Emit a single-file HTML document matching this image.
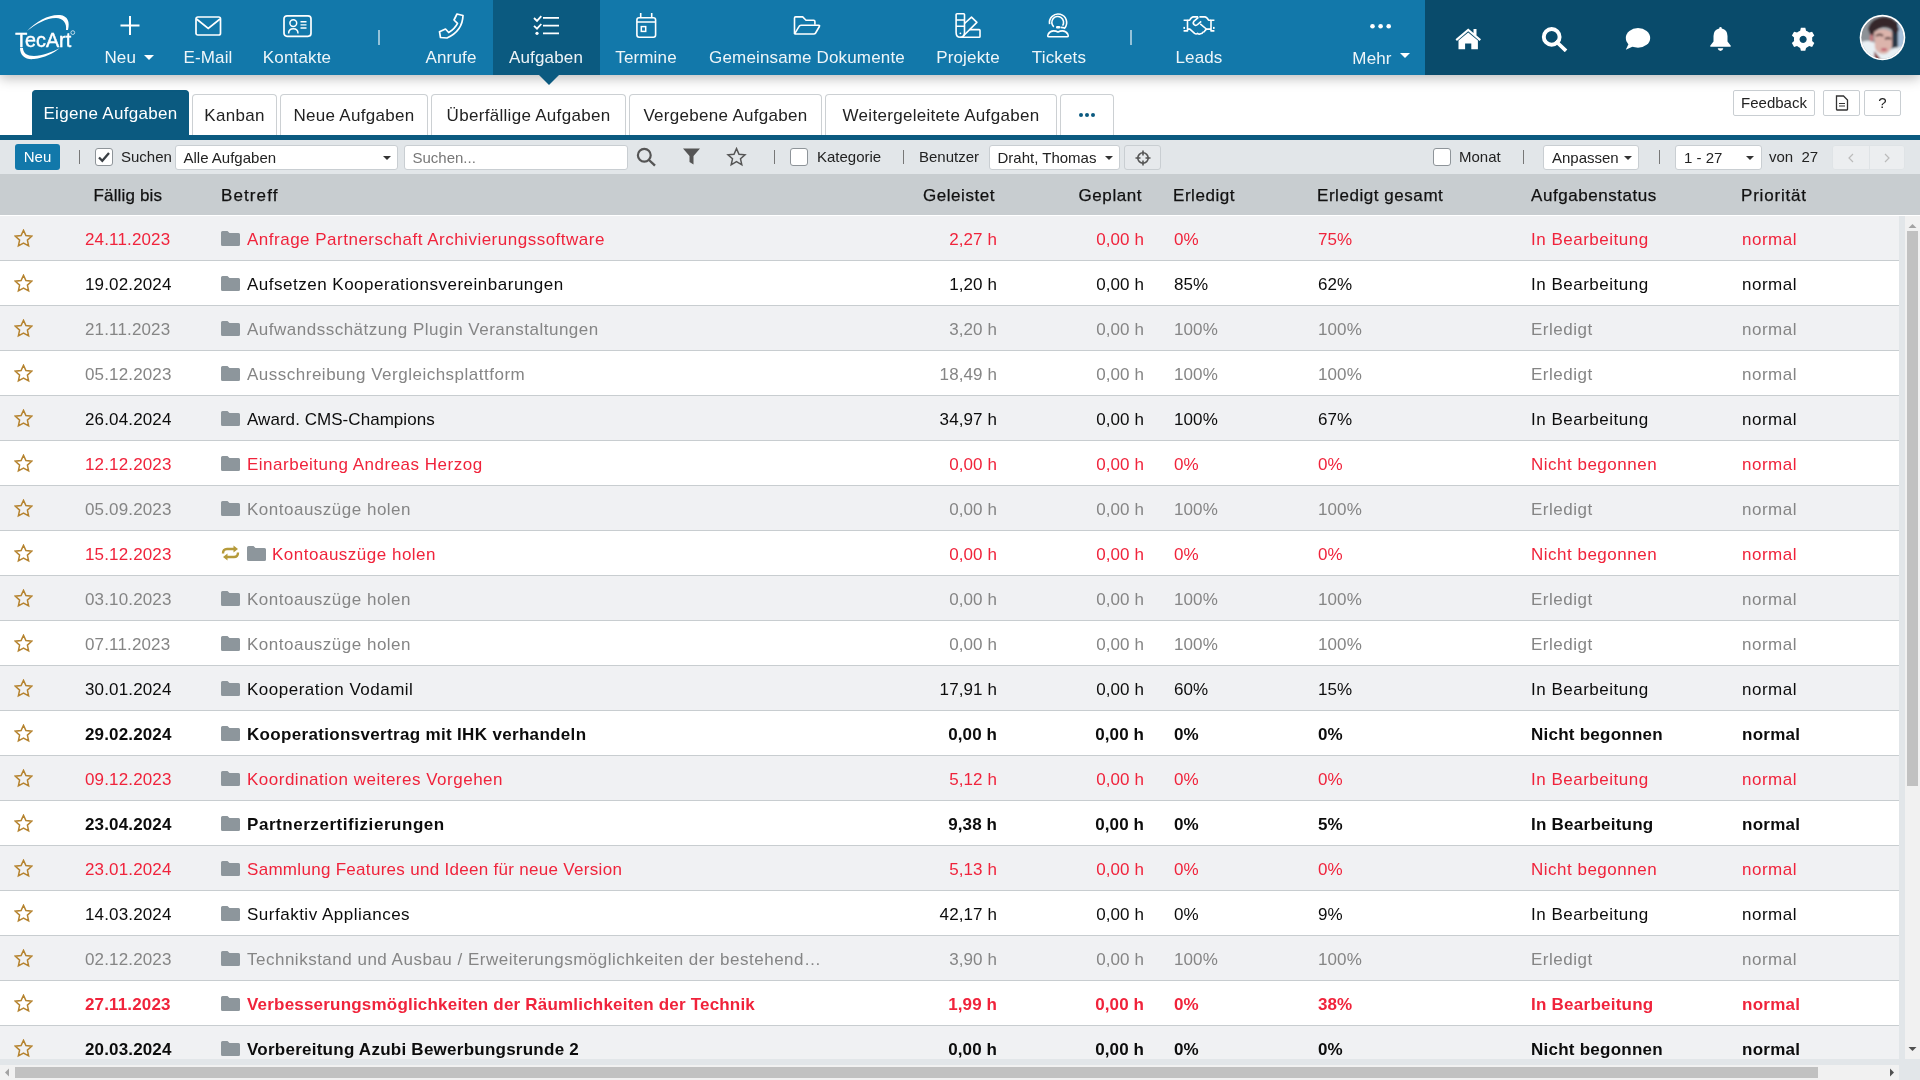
<!DOCTYPE html>
<html><head><meta charset="utf-8">
<style>
*{box-sizing:border-box}
html,body{margin:0;padding:0}
body{width:1920px;height:1080px;overflow:hidden;position:relative;will-change:transform;background:#fff;font-family:"Liberation Sans",sans-serif;color:#111}
.abs{position:absolute}
#hdr{position:absolute;left:0;top:0;width:1920px;height:75px;background:#1278aa;z-index:5;box-shadow:0 3px 12px rgba(0,0,0,.28)}
#hdr .dark{position:absolute;left:1425px;top:0;width:495px;height:75px;background:#094b6b}
#hdr .act{position:absolute;left:493px;top:0;width:107px;height:75px;background:#0b5a80}
#hdr .ptr{position:absolute;left:539px;top:75px;width:0;height:0;border-left:10px solid transparent;border-right:10px solid transparent;border-top:10px solid #0b5a80}
.nl{position:absolute;top:48px;width:240px;text-align:center;color:rgba(255,255,255,.93);font-size:17px;line-height:20px;white-space:nowrap;letter-spacing:.15px}
.nsep{position:absolute;top:30px;width:2px;height:15px;background:rgba(255,255,255,.55)}
.ico{position:absolute}
.caret{display:inline-block;width:0;height:0;border-left:5px solid transparent;border-right:5px solid transparent;border-top:5px solid #fff;vertical-align:middle;margin-left:8px;position:relative;top:-1px}
/* tabs */
.tab{position:absolute;top:94px;height:41px;border:1px solid #ccd0d3;border-bottom:none;border-radius:4px 4px 0 0;background:#fff;font-size:17px;line-height:20px;padding-top:11px;text-align:center;color:#222;white-space:nowrap;letter-spacing:.3px}
.tab.on{top:90px;height:45px;background:#0b5a80;border-color:#0b5a80;color:#fff;padding-top:13px}
#bar{position:absolute;left:0;top:135px;width:1920px;height:5px;background:#0b5a80}
/* toolbar */
#tb{position:absolute;left:0;top:140px;width:1920px;height:34px;background:#e2e6e9}
.tx{position:absolute;font-size:15px;line-height:18px;white-space:nowrap;color:#222}
.sel{position:absolute;top:4.5px;height:25px;background:#fff;border:1px solid #c9ced2;border-radius:3px}
.sel .tx{top:3px;left:8px}
.scaret{position:absolute;top:10.5px;width:0;height:0;border-left:4.5px solid transparent;border-right:4.5px solid transparent;border-top:4.5px solid #333}
.cb{position:absolute;top:8px;width:18px;height:17.5px;background:#fff;border:1px solid #8e9499;border-radius:3px}
.tsep{position:absolute;top:10px;width:1px;height:14px;background:#777}
/* table header */
#th{position:absolute;left:0;top:174px;width:1920px;height:41px;background:#c8cdd0}
#th span{position:absolute;top:12px;font-size:17px;line-height:20px;color:#111;white-space:nowrap;letter-spacing:.55px;-webkit-text-stroke:.25px #111}
#thw{position:absolute;left:0;top:215px;width:1899px;height:1px;background:#fff}
/* rows */
.row{position:absolute;left:0;width:1899px;height:45px;border-bottom:1px solid #c8cdd0}
.row .c{position:absolute;top:14px;font-size:17px;line-height:20px;white-space:nowrap;letter-spacing:.5px}
.row .ic{position:absolute;line-height:0}
.row .ic svg{display:block}
.red{color:#f0233b}
.blk{color:#0c0c0c}
.gry{color:#858585}
.bblk{color:#0c0c0c;font-weight:bold}
.bred{color:#f0233b;font-weight:bold}
.bblk .c,.bred .c{letter-spacing:.25px}
.row .c.n{letter-spacing:.1px}
/* scrollbars */
#vs1{position:absolute;left:1899px;top:216px;width:6px;height:864px;background:#e2e6e9}
#vs{position:absolute;left:1905px;top:216px;width:15px;height:843px;background:#f1f1f1}
#hs1{position:absolute;left:0;top:1059px;width:1920px;height:6px;background:#e2e6e9}
#hs{position:absolute;left:0;top:1065px;width:1899px;height:15px;background:#f1f1f1}
#corner{position:absolute;left:1899px;top:1059px;width:21px;height:21px;background:#e2e6e9}
</style></head><body>

<div id="hdr">
  <div class="dark"></div>
  <div class="act"></div>
  <div class="ptr"></div>
  <!-- logo -->
  <svg class="ico" style="left:12px;top:12px" width="66" height="52" viewBox="0 0 66 52">
    <path d="M15 19 C 24 9, 38 2, 48 3 C 56 4, 58 10, 56 18 L 54 18 C 55 11, 51 6, 44 6 C 34 6, 24 12, 15 19 Z" fill="#fff"/>
    <path d="M8 36 C 8 44, 14 48, 22 47 C 32 46, 42 41, 48 36 C 40 40, 30 44, 22 44 C 15 44, 11 41, 11 36 Z" fill="#fff"/>
    <text x="3.2" y="34.9" font-family="Liberation Sans" font-size="20.3" fill="#fff" stroke="#fff" stroke-width="0.45" textLength="56" lengthAdjust="spacingAndGlyphs">TecArt</text>
    <circle cx="60.8" cy="20.6" r="1.9" fill="none" stroke="#fff" stroke-width=".7"/>
  </svg>
  <!-- Neu -->
  <svg class="ico" style="left:120px;top:16px" width="20" height="20" viewBox="0 0 20 20"><path d="M10 0V19M0.5 9.5H19.5" stroke="#fff" stroke-width="2"/></svg>
  <div class="nl" style="left:9px">Neu<span class="caret" style="margin-left:7.5px"></span></div>
  <!-- E-Mail -->
  <svg class="ico" style="left:195px;top:16px" width="27" height="20" viewBox="0 0 27 20"><rect x="1" y="1" width="24.5" height="18" rx="1.8" fill="none" stroke="#fff" stroke-width="1.7"/><path d="M1.5 3 L13.25 12.5 L25 3" fill="none" stroke="#fff" stroke-width="1.7"/></svg>
  <div class="nl" style="left:88px">E-Mail</div>
  <!-- Kontakte -->
  <svg class="ico" style="left:282px;top:14px" width="31" height="24" viewBox="0 0 31 24"><rect x="2" y="1.8" width="27" height="20.5" rx="3" fill="none" stroke="#fff" stroke-width="1.7"/><circle cx="11.3" cy="9.1" r="3.4" fill="none" stroke="#fff" stroke-width="1.5"/><path d="M6.6 19.6 Q6.6 14.8 11.3 14.8 Q16 14.8 16 19.6" fill="none" stroke="#fff" stroke-width="1.5"/><path d="M18.5 7.8H24.5M18.5 10.9H24.5M18.5 14H24.5" stroke="#fff" stroke-width="1.4"/></svg>
  <div class="nl" style="left:177px">Kontakte</div>
  <div class="nsep" style="left:378px"></div>
  <!-- Anrufe -->
  <svg class="ico" style="left:436px;top:11px" width="30" height="30" viewBox="0 0 30 30"><path d="M21 3 L27 4.5 Q26.5 20 11 27 L4.5 26.5 L3.5 20.7 L9.5 18 L12.7 21.5 Q19 17.5 21.5 12.3 L18 9 Z" fill="none" stroke="#fff" stroke-width="1.7" stroke-linejoin="round"/></svg>
  <div class="nl" style="left:331px">Anrufe</div>
  <!-- Aufgaben -->
  <svg class="ico" style="left:532px;top:13px" width="30" height="24" viewBox="0 0 30 24"><path d="M2 5 L5 7.9 L9.3 3.2 M2 12.8 L5 15.7 L9.3 11" fill="none" stroke="#fff" stroke-width="1.8"/><circle cx="5" cy="20.3" r="1.6" fill="#fff"/><path d="M11 4.8H27M11 12.7H27M11 20.3H27" stroke="#fff" stroke-width="1.8"/></svg>
  <div class="nl" style="left:426px">Aufgaben</div>
  <!-- Termine -->
  <svg class="ico" style="left:633px;top:11px" width="26" height="29" viewBox="0 0 26 29"><rect x="3.9" y="6.8" width="18.7" height="19.5" rx="2.2" fill="none" stroke="#fff" stroke-width="1.6"/><path d="M3.9 11H22.6M7.7 2V6.5M18.7 2V6.5" stroke="#fff" stroke-width="1.6"/><rect x="8.3" y="15.6" width="4.4" height="4.8" fill="none" stroke="#fff" stroke-width="1.5"/></svg>
  <div class="nl" style="left:526px">Termine</div>
  <!-- Gemeinsame Dokumente -->
  <svg class="ico" style="left:790px;top:13px" width="32" height="24" viewBox="0 0 32 24"><path d="M4.5 21 V5 Q4.5 3.9 5.6 3.9 H12.7 L16 7.2 H23.7 Q24.9 7.2 24.9 8.4 V11.8" fill="none" stroke="#fff" stroke-width="1.6" stroke-linejoin="round"/><path d="M4.9 20.3 L9.1 13.4 Q9.6 12.2 11 12.2 H28.6 Q30 12.2 29.4 13.5 L25.6 20 Q25 21 23.7 21 H5.6 Q4.5 21 4.9 20.3 Z" fill="none" stroke="#fff" stroke-width="1.6" stroke-linejoin="round"/></svg>
  <div class="nl" style="left:687px">Gemeinsame Dokumente</div>
  <!-- Projekte -->
  <svg class="ico" style="left:954px;top:12px" width="28" height="27" viewBox="0 0 28 27"><path d="M2.1 2.6 Q2.1 1.7 3 1.7 H9.7 Q10.5 1.7 10.5 2.6 V20.5 Q10.5 25.2 6.3 25.2 Q2.1 25.2 2.1 20.5 Z" fill="none" stroke="#fff" stroke-width="1.6"/><path d="M2.1 8H10.5M2.1 14.3H10.5" stroke="#fff" stroke-width="1.6"/><circle cx="6.4" cy="21.3" r=".9" fill="#fff"/><path d="M10.5 11.5 L17.5 5.2 L22.9 10.4 L9 24.3" fill="none" stroke="#fff" stroke-width="1.6" stroke-linejoin="round"/><path d="M15.5 17.6 H25.2 Q26 17.6 26 18.4 V24.4 Q26 25.2 25.2 25.2 H6.3" fill="none" stroke="#fff" stroke-width="1.6" stroke-linejoin="round"/></svg>
  <div class="nl" style="left:848px">Projekte</div>
  <!-- Tickets -->
  <svg class="ico" style="left:1045px;top:11px" width="26" height="28" viewBox="0 0 26 28"><path d="M4.6 13.2 A8.6 8.6 0 1 1 19.6 17.2 Q18.5 16.4 15.5 16.4" fill="none" stroke="#fff" stroke-width="1.6"/><path d="M8.8 15.8 A5.9 5.9 0 1 1 17.6 14.6" fill="none" stroke="#fff" stroke-width="1.6"/><rect x="11" y="15.1" width="4.2" height="2.4" rx="1.1" fill="#fff"/><path d="M3.8 25.8 Q2 25.8 3.3 23 Q5 19.9 8.5 19.9 Q11 19.9 13 21 Q15 19.9 17.5 19.9 Q21 19.9 22.7 23 Q24 25.8 22.2 25.8 Z" fill="none" stroke="#fff" stroke-width="1.6" stroke-linejoin="round"/></svg>
  <div class="nl" style="left:939px">Tickets</div>
  <div class="nsep" style="left:1130px"></div>
  <!-- Leads -->
  <svg class="ico" style="left:1181px;top:14px" width="36" height="23" viewBox="0 0 36 23"><g fill="none" stroke="#fff" stroke-width="1.6" stroke-linejoin="round" stroke-linecap="butt">
  <path d="M2.6 6.2 H6.5 V16.9 H2.6"/><path d="M33.4 6.2 H30 V16.9 H33.4"/>
  <path d="M6.5 6.2 H8.7 Q10.5 2.9 12.3 2.9 H17.2"/><path d="M18.4 2.9 H23.9 Q25.7 2.9 27.5 6.2 H30"/>
  <path d="M17.4 3.4 L12.8 7.4 Q11.4 9.4 13.4 10.9 Q15 11.9 16.6 10.5 L20.2 7.3"/><path d="M19.2 9.8 L25.4 15"/>
  <path d="M6.5 15.1 H8.9 L13.6 19.4 Q15.2 20.6 16.6 19.4 Q18 20.6 19.6 19.8 Q21.4 19.8 21.8 18.3 Q23.4 18.3 23.8 16.9 L25.4 15.1 H30"/>
  </g><rect x="2.4" y="12.9" width="1.6" height="2" fill="#fff"/><rect x="32" y="12.9" width="1.6" height="2" fill="#fff"/></svg>
  <div class="nl" style="left:1079px">Leads</div>
  <!-- Mehr -->
  <svg class="ico" style="left:1369px;top:22px" width="24" height="9" viewBox="0 0 24 9"><circle cx="3.5" cy="4.3" r="2.3" fill="#fff"/><circle cx="11.6" cy="4.3" r="2.3" fill="#fff"/><circle cx="19.7" cy="4.3" r="2.3" fill="#fff"/></svg>
  <div class="nl" style="left:1261px;top:48.5px">Mehr<span class="caret" style="top:-3.5px"></span></div>
  <!-- right icons -->
  <svg class="ico" style="left:1454px;top:27px" width="29" height="24" viewBox="0 0 29 24"><path d="M1.5 12.3 L14.2 1.5 L19.5 6 V2 H22.5 V8.6 L27 12.3 L25.6 13.9 L14.2 4.3 L2.9 13.9 Z" fill="#fff"/><path d="M4.5 13.5 L14.2 5.4 L23.9 13.5 V22.3 H17.3 V16.4 H11.1 V22.3 H4.5 Z" fill="#fff"/></svg>
  <svg class="ico" style="left:1541px;top:27px" width="27" height="25" viewBox="0 0 27 25"><circle cx="10.7" cy="9.9" r="7.9" fill="none" stroke="#fff" stroke-width="3.9"/><path d="M16 15.3 L23.7 22.6" stroke="#fff" stroke-width="3.7" stroke-linecap="square"/></svg>
  <svg class="ico" style="left:1624px;top:27px" width="28" height="24" viewBox="0 0 28 24"><ellipse cx="14" cy="10.9" rx="12.2" ry="9.8" fill="#fff"/><path d="M5 16 L1.8 22.7 L10 19" fill="#fff"/></svg>
  <svg class="ico" style="left:1709px;top:26px" width="23" height="26" viewBox="0 0 23 26"><path d="M11.5 1 Q12.8 1 12.8 2.4 Q18.5 3.8 18.5 10 V15.5 L21.8 19.7 Q22.3 20.8 21 20.8 H2 Q0.7 20.8 1.2 19.7 L4.5 15.5 V10 Q4.5 3.8 10.2 2.4 Q10.2 1 11.5 1 Z" fill="#fff"/><path d="M8.7 22.3 H14.3 Q13.9 25 11.5 25 Q9.1 25 8.7 22.3 Z" fill="#fff"/></svg>
  <svg class="ico" style="left:1790px;top:26px" width="26" height="26" viewBox="0 0 26 26"><g transform="translate(13.1 13.3) scale(0.92)"><path d="M-2.4 -11.8 H2.4 L3.2 -8.6 Q5.2 -7.9 6.6 -6.6 L9.8 -7.5 L12.2 -3.4 L9.8 -1.1 Q10.1 1 9.8 2.6 L12.2 4.9 L9.8 9 L6.6 8.1 Q5 9.4 3.2 10.1 L2.4 13.3 H-2.4 L-3.2 10.1 Q-5.2 9.4 -6.6 8.1 L-9.8 9 L-12.2 4.9 L-9.8 2.6 Q-10.1 0.8 -9.8 -1.1 L-12.2 -3.4 L-9.8 -7.5 L-6.6 -6.6 Q-5 -7.9 -3.2 -8.6 Z M0 -3.1 A3.9 3.9 0 1 0 0.01 -3.1 Z" fill="#fff" fill-rule="evenodd" transform="translate(0 -0.75)"/></g></svg>
  <!-- avatar -->
  <svg class="ico" style="left:1859px;top:14px" width="47" height="47" viewBox="0 0 47 47">
    <defs><clipPath id="avc"><circle cx="23.5" cy="23.5" r="21"/></clipPath><filter id="avb" x="-20%" y="-20%" width="140%" height="140%"><feGaussianBlur stdDeviation="0.8"/></filter></defs>
    <circle cx="23.5" cy="23.5" r="22.8" fill="#fff"/>
    <g clip-path="url(#avc)">
      <rect x="0" y="0" width="47" height="47" fill="#9aa3ab"/>
      <g filter="url(#avb)">
        <rect x="-2" y="-2" width="20" height="30" fill="#8d9297"/>
        <rect x="33" y="8" width="6" height="30" fill="#2a3746"/>
        <rect x="39" y="8" width="10" height="30" fill="#a9c2dc"/>
        <path d="M-2 30 Q8 24 16 29 L30 36 Q38 31 49 34 L49 49 L-2 49 Z" fill="#e9f0f4"/>
        <path d="M9 15 Q12 3 26 3 Q38 4 40 16 L37 21 Q33 12 24 13 Q16 14 13 25 Z" fill="#35262a"/>
        <path d="M15 18 Q24 12 33 18 L33 32 Q30 40 25 40 Q18 40 16 34 Z" fill="#dcb4ac"/>
        <path d="M17 22 Q21 19 24 22" stroke="#4a3030" stroke-width="1.8" fill="none"/>
        <path d="M26 25 Q29 23 32 25" stroke="#4a3030" stroke-width="1.8" fill="none"/>
        <ellipse cx="25" cy="35.5" rx="3" ry="1.5" fill="#c26070"/>
        <path d="M15 37 Q20 43 23 47 L16 47 Z" fill="#7a1d1d"/>
        <ellipse cx="12.5" cy="24" rx="1.8" ry="3.8" fill="#c7777a"/>
      </g>
    </g>
  </svg>
</div>

<!-- tabs -->
<div class="tab on" style="left:32px;width:157px">Eigene Aufgaben</div>
<div class="tab" style="left:192px;width:85px">Kanban</div>
<div class="tab" style="left:280px;width:148px">Neue Aufgaben</div>
<div class="tab" style="left:431px;width:195px">Überfällige Aufgaben</div>
<div class="tab" style="left:629px;width:193px">Vergebene Aufgaben</div>
<div class="tab" style="left:825px;width:232px">Weitergeleitete Aufgaben</div>
<div class="tab" style="left:1060px;width:54px"><svg width="18" height="6" viewBox="0 0 18 6" style="position:relative;top:-3px"><circle cx="3" cy="3" r="2" fill="#0b5a80"/><circle cx="9" cy="3" r="2" fill="#0b5a80"/><circle cx="15" cy="3" r="2" fill="#0b5a80"/></svg></div>
<div class="abs" style="left:1733px;top:90px;width:82px;height:26px;border:1px solid #c9ced2;border-radius:2px;font-size:15px;line-height:18px;padding-top:3px;text-align:center;color:#222">Feedback</div>
<div class="abs" style="left:1823px;top:90px;width:37px;height:26px;border:1px solid #c9ced2;border-radius:2px"><svg width="14" height="16" viewBox="0 0 14 16" style="position:absolute;left:11px;top:4px"><path d="M1.5 1 H8.5 L12.5 5 V14.5 Q12.5 15 12 15 H2 Q1.5 15 1.5 14.5 Z" fill="none" stroke="#333" stroke-width="1.3"/><path d="M4 8.5H10M4 11H10" stroke="#333" stroke-width="1.2"/></svg></div>
<div class="abs" style="left:1864px;top:90px;width:37px;height:26px;border:1px solid #c9ced2;border-radius:2px;font-size:15px;line-height:18px;padding-top:3px;text-align:center;color:#222">?</div>
<div id="bar"></div>

<!-- toolbar -->
<div id="tb">
  <div class="abs" style="left:15px;top:4px;width:45px;height:25.5px;background:#1278aa;border-radius:3px;color:#fff;font-size:15px;line-height:18px;padding-top:4px;text-align:center">Neu</div>
  <div class="tsep" style="left:79px"></div>
  <div class="cb" style="left:95px"><svg width="16" height="16" viewBox="0 0 16 16" style="position:absolute;left:0;top:0"><path d="M3 8.5 L6.3 11.8 L13 4" fill="none" stroke="#3a3f44" stroke-width="2.3"/></svg></div>
  <div class="tx" style="left:121px;top:8px">Suchen</div>
  <div class="sel" style="left:174.5px;width:223.5px"><div class="tx">Alle Aufgaben</div><div class="scaret" style="left:207px"></div></div>
  <div class="sel" style="left:403.5px;width:224px"><div class="tx" style="color:#777">Suchen...</div></div>
  <svg class="abs" style="left:636px;top:147px" width="21" height="20" viewBox="0 0 21 20"></svg>
  <svg class="abs" style="left:636px;top:7px" width="21" height="20" viewBox="0 0 21 20"><circle cx="8.3" cy="8.3" r="6.4" fill="none" stroke="#555" stroke-width="2.2"/><path d="M13 13 L19 18.7" stroke="#555" stroke-width="2.4"/></svg>
  <svg class="abs" style="left:682px;top:8px" width="19" height="18" viewBox="0 0 19 18"><path d="M1 0.5 H18 L11.5 8 V16.5 L7.5 14 V8 Z" fill="#555"/></svg>
  <svg class="abs" style="left:726px;top:7px" width="21" height="20" viewBox="0 0 21 20"><path d="M10.5 1.6 L13 7.2 L19 7.8 L14.5 11.8 L15.8 17.8 L10.5 14.7 L5.2 17.8 L6.5 11.8 L2 7.8 L8 7.2 Z" fill="none" stroke="#555" stroke-width="1.5"/></svg>
  <div class="tsep" style="left:773.5px"></div>
  <div class="cb" style="left:790px"></div>
  <div class="tx" style="left:817px;top:8px">Kategorie</div>
  <div class="tsep" style="left:902.5px"></div>
  <div class="tx" style="left:919px;top:8px">Benutzer</div>
  <div class="sel" style="left:988.5px;width:131px"><div class="tx">Draht, Thomas</div><div class="scaret" style="left:115px"></div></div>
  <div class="sel" style="left:1124px;width:36.5px;background:#e6e9ec"><svg width="20" height="20" viewBox="0 0 20 20" style="position:absolute;left:8px;top:2px"><circle cx="10" cy="10" r="5.2" fill="none" stroke="#555" stroke-width="1.6"/><path d="M10 2.5V7.5M10 12.5V17.5M2.5 10H7.5M12.5 10H17.5" stroke="#555" stroke-width="1.6"/></svg></div>
  <div class="cb" style="left:1433px"></div>
  <div class="tx" style="left:1459px;top:8px">Monat</div>
  <div class="tsep" style="left:1522.5px"></div>
  <div class="sel" style="left:1543px;width:96px"><div class="tx">Anpassen</div><div class="scaret" style="left:80px"></div></div>
  <div class="tsep" style="left:1658.5px"></div>
  <div class="sel" style="left:1675px;width:87px"><div class="tx">1 - 27</div><div class="scaret" style="left:70px"></div></div>
  <div class="tx" style="left:1769px;top:8px">von&nbsp; 27</div>
  <div class="sel" style="left:1832px;width:72.5px;background:#eceef0;border-color:#dfe3e6"><div class="abs" style="left:35.5px;top:0;width:1px;height:23px;background:#dfe3e6"></div>
    <svg width="8" height="10" viewBox="0 0 8 10" style="position:absolute;left:14px;top:7px"><path d="M6 1 L2 5 L6 9" fill="none" stroke="#bbb" stroke-width="1.2"/></svg>
    <svg width="8" height="10" viewBox="0 0 8 10" style="position:absolute;left:50px;top:7px"><path d="M2 1 L6 5 L2 9" fill="none" stroke="#bbb" stroke-width="1.2"/></svg>
  </div>
</div>

<!-- table header -->
<div id="th">
  <span style="left:93.5px;letter-spacing:.15px">Fällig bis</span>
  <span style="left:221px;letter-spacing:1.1px">Betreff</span>
  <span style="right:925px">Geleistet</span>
  <span style="right:778px">Geplant</span>
  <span style="left:1173px">Erledigt</span>
  <span style="left:1317px">Erledigt gesamt</span>
  <span style="left:1531px">Aufgabenstatus</span>
  <span style="left:1741px;letter-spacing:.8px">Priorität</span>
</div>
<div id="thw"></div>

<div class="row red" style="top:216px;background:#f0f1f3"><div class="ic" style="left:14px;top:13px"><svg class="star" width="19" height="19" viewBox="0 0 19 19"><path d="M9.5 1.3 L11.9 6.6 L17.7 7.2 L13.4 11.1 L14.6 16.9 L9.5 14 L4.4 16.9 L5.6 11.1 L1.3 7.2 L7.1 6.6 Z" fill="none" stroke="#b5832f" stroke-width="1.5" stroke-linejoin="miter"/></svg></div><span class="c n" style="left:85px;letter-spacing:.15px">24.11.2023</span><div class="ic" style="left:221px;top:15px"><svg class="fold" width="19" height="15" viewBox="0 0 19 15"><path d="M0 1.5 Q0 0 1.5 0 L6.5 0 L8.5 2 L17.5 2 Q19 2 19 3.5 L19 13.5 Q19 15 17.5 15 L1.5 15 Q0 15 0 13.5 Z" fill="#8d969c"/></svg></div><span class="c" style="left:247px">Anfrage Partnerschaft Archivierungssoftware</span><span class="c n" style="right:902px">2,27 h</span><span class="c n" style="right:755px">0,00 h</span><span class="c n" style="left:1174px">0%</span><span class="c n" style="left:1318px">75%</span><span class="c" style="left:1531px">In Bearbeitung</span><span class="c" style="left:1742px">normal</span></div>
<div class="row blk" style="top:261px;background:#ffffff"><div class="ic" style="left:14px;top:13px"><svg class="star" width="19" height="19" viewBox="0 0 19 19"><path d="M9.5 1.3 L11.9 6.6 L17.7 7.2 L13.4 11.1 L14.6 16.9 L9.5 14 L4.4 16.9 L5.6 11.1 L1.3 7.2 L7.1 6.6 Z" fill="none" stroke="#b5832f" stroke-width="1.5" stroke-linejoin="miter"/></svg></div><span class="c n" style="left:85px;letter-spacing:.15px">19.02.2024</span><div class="ic" style="left:221px;top:15px"><svg class="fold" width="19" height="15" viewBox="0 0 19 15"><path d="M0 1.5 Q0 0 1.5 0 L6.5 0 L8.5 2 L17.5 2 Q19 2 19 3.5 L19 13.5 Q19 15 17.5 15 L1.5 15 Q0 15 0 13.5 Z" fill="#8d969c"/></svg></div><span class="c" style="left:247px">Aufsetzen Kooperationsvereinbarungen</span><span class="c n" style="right:902px">1,20 h</span><span class="c n" style="right:755px">0,00 h</span><span class="c n" style="left:1174px">85%</span><span class="c n" style="left:1318px">62%</span><span class="c" style="left:1531px">In Bearbeitung</span><span class="c" style="left:1742px">normal</span></div>
<div class="row gry" style="top:306px;background:#f0f1f3"><div class="ic" style="left:14px;top:13px"><svg class="star" width="19" height="19" viewBox="0 0 19 19"><path d="M9.5 1.3 L11.9 6.6 L17.7 7.2 L13.4 11.1 L14.6 16.9 L9.5 14 L4.4 16.9 L5.6 11.1 L1.3 7.2 L7.1 6.6 Z" fill="none" stroke="#b5832f" stroke-width="1.5" stroke-linejoin="miter"/></svg></div><span class="c n" style="left:85px;letter-spacing:.15px">21.11.2023</span><div class="ic" style="left:221px;top:15px"><svg class="fold" width="19" height="15" viewBox="0 0 19 15"><path d="M0 1.5 Q0 0 1.5 0 L6.5 0 L8.5 2 L17.5 2 Q19 2 19 3.5 L19 13.5 Q19 15 17.5 15 L1.5 15 Q0 15 0 13.5 Z" fill="#8d969c"/></svg></div><span class="c" style="left:247px">Aufwandsschätzung Plugin Veranstaltungen</span><span class="c n" style="right:902px">3,20 h</span><span class="c n" style="right:755px">0,00 h</span><span class="c n" style="left:1174px">100%</span><span class="c n" style="left:1318px">100%</span><span class="c" style="left:1531px">Erledigt</span><span class="c" style="left:1742px">normal</span></div>
<div class="row gry" style="top:351px;background:#ffffff"><div class="ic" style="left:14px;top:13px"><svg class="star" width="19" height="19" viewBox="0 0 19 19"><path d="M9.5 1.3 L11.9 6.6 L17.7 7.2 L13.4 11.1 L14.6 16.9 L9.5 14 L4.4 16.9 L5.6 11.1 L1.3 7.2 L7.1 6.6 Z" fill="none" stroke="#b5832f" stroke-width="1.5" stroke-linejoin="miter"/></svg></div><span class="c n" style="left:85px;letter-spacing:.15px">05.12.2023</span><div class="ic" style="left:221px;top:15px"><svg class="fold" width="19" height="15" viewBox="0 0 19 15"><path d="M0 1.5 Q0 0 1.5 0 L6.5 0 L8.5 2 L17.5 2 Q19 2 19 3.5 L19 13.5 Q19 15 17.5 15 L1.5 15 Q0 15 0 13.5 Z" fill="#8d969c"/></svg></div><span class="c" style="left:247px">Ausschreibung Vergleichsplattform</span><span class="c n" style="right:902px">18,49 h</span><span class="c n" style="right:755px">0,00 h</span><span class="c n" style="left:1174px">100%</span><span class="c n" style="left:1318px">100%</span><span class="c" style="left:1531px">Erledigt</span><span class="c" style="left:1742px">normal</span></div>
<div class="row blk" style="top:396px;background:#f0f1f3"><div class="ic" style="left:14px;top:13px"><svg class="star" width="19" height="19" viewBox="0 0 19 19"><path d="M9.5 1.3 L11.9 6.6 L17.7 7.2 L13.4 11.1 L14.6 16.9 L9.5 14 L4.4 16.9 L5.6 11.1 L1.3 7.2 L7.1 6.6 Z" fill="none" stroke="#b5832f" stroke-width="1.5" stroke-linejoin="miter"/></svg></div><span class="c n" style="left:85px;letter-spacing:.15px">26.04.2024</span><div class="ic" style="left:221px;top:15px"><svg class="fold" width="19" height="15" viewBox="0 0 19 15"><path d="M0 1.5 Q0 0 1.5 0 L6.5 0 L8.5 2 L17.5 2 Q19 2 19 3.5 L19 13.5 Q19 15 17.5 15 L1.5 15 Q0 15 0 13.5 Z" fill="#8d969c"/></svg></div><span class="c" style="left:247px;letter-spacing:.05px">Award. CMS-Champions</span><span class="c n" style="right:902px">34,97 h</span><span class="c n" style="right:755px">0,00 h</span><span class="c n" style="left:1174px">100%</span><span class="c n" style="left:1318px">67%</span><span class="c" style="left:1531px">In Bearbeitung</span><span class="c" style="left:1742px">normal</span></div>
<div class="row red" style="top:441px;background:#ffffff"><div class="ic" style="left:14px;top:13px"><svg class="star" width="19" height="19" viewBox="0 0 19 19"><path d="M9.5 1.3 L11.9 6.6 L17.7 7.2 L13.4 11.1 L14.6 16.9 L9.5 14 L4.4 16.9 L5.6 11.1 L1.3 7.2 L7.1 6.6 Z" fill="none" stroke="#b5832f" stroke-width="1.5" stroke-linejoin="miter"/></svg></div><span class="c n" style="left:85px;letter-spacing:.15px">12.12.2023</span><div class="ic" style="left:221px;top:15px"><svg class="fold" width="19" height="15" viewBox="0 0 19 15"><path d="M0 1.5 Q0 0 1.5 0 L6.5 0 L8.5 2 L17.5 2 Q19 2 19 3.5 L19 13.5 Q19 15 17.5 15 L1.5 15 Q0 15 0 13.5 Z" fill="#8d969c"/></svg></div><span class="c" style="left:247px">Einarbeitung Andreas Herzog</span><span class="c n" style="right:902px">0,00 h</span><span class="c n" style="right:755px">0,00 h</span><span class="c n" style="left:1174px">0%</span><span class="c n" style="left:1318px">0%</span><span class="c" style="left:1531px">Nicht begonnen</span><span class="c" style="left:1742px">normal</span></div>
<div class="row gry" style="top:486px;background:#f0f1f3"><div class="ic" style="left:14px;top:13px"><svg class="star" width="19" height="19" viewBox="0 0 19 19"><path d="M9.5 1.3 L11.9 6.6 L17.7 7.2 L13.4 11.1 L14.6 16.9 L9.5 14 L4.4 16.9 L5.6 11.1 L1.3 7.2 L7.1 6.6 Z" fill="none" stroke="#b5832f" stroke-width="1.5" stroke-linejoin="miter"/></svg></div><span class="c n" style="left:85px;letter-spacing:.15px">05.09.2023</span><div class="ic" style="left:221px;top:15px"><svg class="fold" width="19" height="15" viewBox="0 0 19 15"><path d="M0 1.5 Q0 0 1.5 0 L6.5 0 L8.5 2 L17.5 2 Q19 2 19 3.5 L19 13.5 Q19 15 17.5 15 L1.5 15 Q0 15 0 13.5 Z" fill="#8d969c"/></svg></div><span class="c" style="left:247px">Kontoauszüge holen</span><span class="c n" style="right:902px">0,00 h</span><span class="c n" style="right:755px">0,00 h</span><span class="c n" style="left:1174px">100%</span><span class="c n" style="left:1318px">100%</span><span class="c" style="left:1531px">Erledigt</span><span class="c" style="left:1742px">normal</span></div>
<div class="row red" style="top:531px;background:#ffffff"><div class="ic" style="left:14px;top:13px"><svg class="star" width="19" height="19" viewBox="0 0 19 19"><path d="M9.5 1.3 L11.9 6.6 L17.7 7.2 L13.4 11.1 L14.6 16.9 L9.5 14 L4.4 16.9 L5.6 11.1 L1.3 7.2 L7.1 6.6 Z" fill="none" stroke="#b5832f" stroke-width="1.5" stroke-linejoin="miter"/></svg></div><span class="c n" style="left:85px;letter-spacing:.15px">15.12.2023</span><div class="ic" style="left:221px;top:14px"><svg class="rep" width="19" height="16" viewBox="0 0 19 16"><path d="M2 8.5 Q2 4 6 4 L13.5 4" fill="none" stroke="#b59a3a" stroke-width="2.4"/><path d="M12.5 0.5 L17 4 L12.5 7.5 Z" fill="#b59a3a"/><path d="M17 7.5 Q17 12 13 12 L5.5 12" fill="none" stroke="#b59a3a" stroke-width="2.4"/><path d="M6.5 8.5 L2 12 L6.5 15.5 Z" fill="#b59a3a"/></svg></div><div class="ic" style="left:247px;top:15px"><svg class="fold" width="19" height="15" viewBox="0 0 19 15"><path d="M0 1.5 Q0 0 1.5 0 L6.5 0 L8.5 2 L17.5 2 Q19 2 19 3.5 L19 13.5 Q19 15 17.5 15 L1.5 15 Q0 15 0 13.5 Z" fill="#8d969c"/></svg></div><span class="c" style="left:272px">Kontoauszüge holen</span><span class="c n" style="right:902px">0,00 h</span><span class="c n" style="right:755px">0,00 h</span><span class="c n" style="left:1174px">0%</span><span class="c n" style="left:1318px">0%</span><span class="c" style="left:1531px">Nicht begonnen</span><span class="c" style="left:1742px">normal</span></div>
<div class="row gry" style="top:576px;background:#f0f1f3"><div class="ic" style="left:14px;top:13px"><svg class="star" width="19" height="19" viewBox="0 0 19 19"><path d="M9.5 1.3 L11.9 6.6 L17.7 7.2 L13.4 11.1 L14.6 16.9 L9.5 14 L4.4 16.9 L5.6 11.1 L1.3 7.2 L7.1 6.6 Z" fill="none" stroke="#b5832f" stroke-width="1.5" stroke-linejoin="miter"/></svg></div><span class="c n" style="left:85px;letter-spacing:.15px">03.10.2023</span><div class="ic" style="left:221px;top:15px"><svg class="fold" width="19" height="15" viewBox="0 0 19 15"><path d="M0 1.5 Q0 0 1.5 0 L6.5 0 L8.5 2 L17.5 2 Q19 2 19 3.5 L19 13.5 Q19 15 17.5 15 L1.5 15 Q0 15 0 13.5 Z" fill="#8d969c"/></svg></div><span class="c" style="left:247px">Kontoauszüge holen</span><span class="c n" style="right:902px">0,00 h</span><span class="c n" style="right:755px">0,00 h</span><span class="c n" style="left:1174px">100%</span><span class="c n" style="left:1318px">100%</span><span class="c" style="left:1531px">Erledigt</span><span class="c" style="left:1742px">normal</span></div>
<div class="row gry" style="top:621px;background:#ffffff"><div class="ic" style="left:14px;top:13px"><svg class="star" width="19" height="19" viewBox="0 0 19 19"><path d="M9.5 1.3 L11.9 6.6 L17.7 7.2 L13.4 11.1 L14.6 16.9 L9.5 14 L4.4 16.9 L5.6 11.1 L1.3 7.2 L7.1 6.6 Z" fill="none" stroke="#b5832f" stroke-width="1.5" stroke-linejoin="miter"/></svg></div><span class="c n" style="left:85px;letter-spacing:.15px">07.11.2023</span><div class="ic" style="left:221px;top:15px"><svg class="fold" width="19" height="15" viewBox="0 0 19 15"><path d="M0 1.5 Q0 0 1.5 0 L6.5 0 L8.5 2 L17.5 2 Q19 2 19 3.5 L19 13.5 Q19 15 17.5 15 L1.5 15 Q0 15 0 13.5 Z" fill="#8d969c"/></svg></div><span class="c" style="left:247px">Kontoauszüge holen</span><span class="c n" style="right:902px">0,00 h</span><span class="c n" style="right:755px">0,00 h</span><span class="c n" style="left:1174px">100%</span><span class="c n" style="left:1318px">100%</span><span class="c" style="left:1531px">Erledigt</span><span class="c" style="left:1742px">normal</span></div>
<div class="row blk" style="top:666px;background:#f0f1f3"><div class="ic" style="left:14px;top:13px"><svg class="star" width="19" height="19" viewBox="0 0 19 19"><path d="M9.5 1.3 L11.9 6.6 L17.7 7.2 L13.4 11.1 L14.6 16.9 L9.5 14 L4.4 16.9 L5.6 11.1 L1.3 7.2 L7.1 6.6 Z" fill="none" stroke="#b5832f" stroke-width="1.5" stroke-linejoin="miter"/></svg></div><span class="c n" style="left:85px;letter-spacing:.15px">30.01.2024</span><div class="ic" style="left:221px;top:15px"><svg class="fold" width="19" height="15" viewBox="0 0 19 15"><path d="M0 1.5 Q0 0 1.5 0 L6.5 0 L8.5 2 L17.5 2 Q19 2 19 3.5 L19 13.5 Q19 15 17.5 15 L1.5 15 Q0 15 0 13.5 Z" fill="#8d969c"/></svg></div><span class="c" style="left:247px">Kooperation Vodamil</span><span class="c n" style="right:902px">17,91 h</span><span class="c n" style="right:755px">0,00 h</span><span class="c n" style="left:1174px">60%</span><span class="c n" style="left:1318px">15%</span><span class="c" style="left:1531px">In Bearbeitung</span><span class="c" style="left:1742px">normal</span></div>
<div class="row bblk" style="top:711px;background:#ffffff"><div class="ic" style="left:14px;top:13px"><svg class="star" width="19" height="19" viewBox="0 0 19 19"><path d="M9.5 1.3 L11.9 6.6 L17.7 7.2 L13.4 11.1 L14.6 16.9 L9.5 14 L4.4 16.9 L5.6 11.1 L1.3 7.2 L7.1 6.6 Z" fill="none" stroke="#b5832f" stroke-width="1.5" stroke-linejoin="miter"/></svg></div><span class="c n" style="left:85px;letter-spacing:.15px">29.02.2024</span><div class="ic" style="left:221px;top:15px"><svg class="fold" width="19" height="15" viewBox="0 0 19 15"><path d="M0 1.5 Q0 0 1.5 0 L6.5 0 L8.5 2 L17.5 2 Q19 2 19 3.5 L19 13.5 Q19 15 17.5 15 L1.5 15 Q0 15 0 13.5 Z" fill="#8d969c"/></svg></div><span class="c" style="left:247px;letter-spacing:.33px">Kooperationsvertrag mit IHK verhandeln</span><span class="c n" style="right:902px">0,00 h</span><span class="c n" style="right:755px">0,00 h</span><span class="c n" style="left:1174px">0%</span><span class="c n" style="left:1318px">0%</span><span class="c" style="left:1531px">Nicht begonnen</span><span class="c" style="left:1742px">normal</span></div>
<div class="row red" style="top:756px;background:#f0f1f3"><div class="ic" style="left:14px;top:13px"><svg class="star" width="19" height="19" viewBox="0 0 19 19"><path d="M9.5 1.3 L11.9 6.6 L17.7 7.2 L13.4 11.1 L14.6 16.9 L9.5 14 L4.4 16.9 L5.6 11.1 L1.3 7.2 L7.1 6.6 Z" fill="none" stroke="#b5832f" stroke-width="1.5" stroke-linejoin="miter"/></svg></div><span class="c n" style="left:85px;letter-spacing:.15px">09.12.2023</span><div class="ic" style="left:221px;top:15px"><svg class="fold" width="19" height="15" viewBox="0 0 19 15"><path d="M0 1.5 Q0 0 1.5 0 L6.5 0 L8.5 2 L17.5 2 Q19 2 19 3.5 L19 13.5 Q19 15 17.5 15 L1.5 15 Q0 15 0 13.5 Z" fill="#8d969c"/></svg></div><span class="c" style="left:247px">Koordination weiteres Vorgehen</span><span class="c n" style="right:902px">5,12 h</span><span class="c n" style="right:755px">0,00 h</span><span class="c n" style="left:1174px">0%</span><span class="c n" style="left:1318px">0%</span><span class="c" style="left:1531px">In Bearbeitung</span><span class="c" style="left:1742px">normal</span></div>
<div class="row bblk" style="top:801px;background:#ffffff"><div class="ic" style="left:14px;top:13px"><svg class="star" width="19" height="19" viewBox="0 0 19 19"><path d="M9.5 1.3 L11.9 6.6 L17.7 7.2 L13.4 11.1 L14.6 16.9 L9.5 14 L4.4 16.9 L5.6 11.1 L1.3 7.2 L7.1 6.6 Z" fill="none" stroke="#b5832f" stroke-width="1.5" stroke-linejoin="miter"/></svg></div><span class="c n" style="left:85px;letter-spacing:.15px">23.04.2024</span><div class="ic" style="left:221px;top:15px"><svg class="fold" width="19" height="15" viewBox="0 0 19 15"><path d="M0 1.5 Q0 0 1.5 0 L6.5 0 L8.5 2 L17.5 2 Q19 2 19 3.5 L19 13.5 Q19 15 17.5 15 L1.5 15 Q0 15 0 13.5 Z" fill="#8d969c"/></svg></div><span class="c" style="left:247px;letter-spacing:.55px">Partnerzertifizierungen</span><span class="c n" style="right:902px">9,38 h</span><span class="c n" style="right:755px">0,00 h</span><span class="c n" style="left:1174px">0%</span><span class="c n" style="left:1318px">5%</span><span class="c" style="left:1531px">In Bearbeitung</span><span class="c" style="left:1742px">normal</span></div>
<div class="row red" style="top:846px;background:#f0f1f3"><div class="ic" style="left:14px;top:13px"><svg class="star" width="19" height="19" viewBox="0 0 19 19"><path d="M9.5 1.3 L11.9 6.6 L17.7 7.2 L13.4 11.1 L14.6 16.9 L9.5 14 L4.4 16.9 L5.6 11.1 L1.3 7.2 L7.1 6.6 Z" fill="none" stroke="#b5832f" stroke-width="1.5" stroke-linejoin="miter"/></svg></div><span class="c n" style="left:85px;letter-spacing:.15px">23.01.2024</span><div class="ic" style="left:221px;top:15px"><svg class="fold" width="19" height="15" viewBox="0 0 19 15"><path d="M0 1.5 Q0 0 1.5 0 L6.5 0 L8.5 2 L17.5 2 Q19 2 19 3.5 L19 13.5 Q19 15 17.5 15 L1.5 15 Q0 15 0 13.5 Z" fill="#8d969c"/></svg></div><span class="c" style="left:247px;letter-spacing:.3px">Sammlung Features und Ideen für neue Version</span><span class="c n" style="right:902px">5,13 h</span><span class="c n" style="right:755px">0,00 h</span><span class="c n" style="left:1174px">0%</span><span class="c n" style="left:1318px">0%</span><span class="c" style="left:1531px">Nicht begonnen</span><span class="c" style="left:1742px">normal</span></div>
<div class="row blk" style="top:891px;background:#ffffff"><div class="ic" style="left:14px;top:13px"><svg class="star" width="19" height="19" viewBox="0 0 19 19"><path d="M9.5 1.3 L11.9 6.6 L17.7 7.2 L13.4 11.1 L14.6 16.9 L9.5 14 L4.4 16.9 L5.6 11.1 L1.3 7.2 L7.1 6.6 Z" fill="none" stroke="#b5832f" stroke-width="1.5" stroke-linejoin="miter"/></svg></div><span class="c n" style="left:85px;letter-spacing:.15px">14.03.2024</span><div class="ic" style="left:221px;top:15px"><svg class="fold" width="19" height="15" viewBox="0 0 19 15"><path d="M0 1.5 Q0 0 1.5 0 L6.5 0 L8.5 2 L17.5 2 Q19 2 19 3.5 L19 13.5 Q19 15 17.5 15 L1.5 15 Q0 15 0 13.5 Z" fill="#8d969c"/></svg></div><span class="c" style="left:247px">Surfaktiv Appliances</span><span class="c n" style="right:902px">42,17 h</span><span class="c n" style="right:755px">0,00 h</span><span class="c n" style="left:1174px">0%</span><span class="c n" style="left:1318px">9%</span><span class="c" style="left:1531px">In Bearbeitung</span><span class="c" style="left:1742px">normal</span></div>
<div class="row gry" style="top:936px;background:#f0f1f3"><div class="ic" style="left:14px;top:13px"><svg class="star" width="19" height="19" viewBox="0 0 19 19"><path d="M9.5 1.3 L11.9 6.6 L17.7 7.2 L13.4 11.1 L14.6 16.9 L9.5 14 L4.4 16.9 L5.6 11.1 L1.3 7.2 L7.1 6.6 Z" fill="none" stroke="#b5832f" stroke-width="1.5" stroke-linejoin="miter"/></svg></div><span class="c n" style="left:85px;letter-spacing:.15px">02.12.2023</span><div class="ic" style="left:221px;top:15px"><svg class="fold" width="19" height="15" viewBox="0 0 19 15"><path d="M0 1.5 Q0 0 1.5 0 L6.5 0 L8.5 2 L17.5 2 Q19 2 19 3.5 L19 13.5 Q19 15 17.5 15 L1.5 15 Q0 15 0 13.5 Z" fill="#8d969c"/></svg></div><span class="c" style="left:247px">Technikstand und Ausbau / Erweiterungsmöglichkeiten der bestehend…</span><span class="c n" style="right:902px">3,90 h</span><span class="c n" style="right:755px">0,00 h</span><span class="c n" style="left:1174px">100%</span><span class="c n" style="left:1318px">100%</span><span class="c" style="left:1531px">Erledigt</span><span class="c" style="left:1742px">normal</span></div>
<div class="row bred" style="top:981px;background:#ffffff"><div class="ic" style="left:14px;top:13px"><svg class="star" width="19" height="19" viewBox="0 0 19 19"><path d="M9.5 1.3 L11.9 6.6 L17.7 7.2 L13.4 11.1 L14.6 16.9 L9.5 14 L4.4 16.9 L5.6 11.1 L1.3 7.2 L7.1 6.6 Z" fill="none" stroke="#b5832f" stroke-width="1.5" stroke-linejoin="miter"/></svg></div><span class="c n" style="left:85px;letter-spacing:.15px">27.11.2023</span><div class="ic" style="left:221px;top:15px"><svg class="fold" width="19" height="15" viewBox="0 0 19 15"><path d="M0 1.5 Q0 0 1.5 0 L6.5 0 L8.5 2 L17.5 2 Q19 2 19 3.5 L19 13.5 Q19 15 17.5 15 L1.5 15 Q0 15 0 13.5 Z" fill="#8d969c"/></svg></div><span class="c" style="left:247px;letter-spacing:.2px">Verbesserungsmöglichkeiten der Räumlichkeiten der Technik</span><span class="c n" style="right:902px">1,99 h</span><span class="c n" style="right:755px">0,00 h</span><span class="c n" style="left:1174px">0%</span><span class="c n" style="left:1318px">38%</span><span class="c" style="left:1531px">In Bearbeitung</span><span class="c" style="left:1742px">normal</span></div>
<div class="row bblk" style="top:1026px;background:#f0f1f3"><div class="ic" style="left:14px;top:13px"><svg class="star" width="19" height="19" viewBox="0 0 19 19"><path d="M9.5 1.3 L11.9 6.6 L17.7 7.2 L13.4 11.1 L14.6 16.9 L9.5 14 L4.4 16.9 L5.6 11.1 L1.3 7.2 L7.1 6.6 Z" fill="none" stroke="#b5832f" stroke-width="1.5" stroke-linejoin="miter"/></svg></div><span class="c n" style="left:85px;letter-spacing:.15px">20.03.2024</span><div class="ic" style="left:221px;top:15px"><svg class="fold" width="19" height="15" viewBox="0 0 19 15"><path d="M0 1.5 Q0 0 1.5 0 L6.5 0 L8.5 2 L17.5 2 Q19 2 19 3.5 L19 13.5 Q19 15 17.5 15 L1.5 15 Q0 15 0 13.5 Z" fill="#8d969c"/></svg></div><span class="c" style="left:247px">Vorbereitung Azubi Bewerbungsrunde 2</span><span class="c n" style="right:902px">0,00 h</span><span class="c n" style="right:755px">0,00 h</span><span class="c n" style="left:1174px">0%</span><span class="c n" style="left:1318px">0%</span><span class="c" style="left:1531px">Nicht begonnen</span><span class="c" style="left:1742px">normal</span></div>

<div id="vs1"></div>
<div id="vs">
  <svg width="15" height="15" viewBox="0 0 15 15" style="position:absolute;left:0;top:2px"><path d="M3.5 10 L7.5 6 L11.5 10 Z" fill="#a3a3a3"/></svg>
  <div class="abs" style="left:2px;top:15px;width:11px;height:555px;background:#c1c1c1"></div>
  <svg width="15" height="15" viewBox="0 0 15 15" style="position:absolute;left:0;top:826px"><path d="M3.5 5 L7.5 9 L11.5 5 Z" fill="#505050"/></svg>
</div>
<div id="hs1"></div>
<div id="hs">
  <svg width="15" height="15" viewBox="0 0 15 15" style="position:absolute;left:0;top:0"><path d="M9 3.5 L5 7.5 L9 11.5 Z" fill="#a3a3a3"/></svg>
  <div class="abs" style="left:15px;top:2px;width:1803px;height:11px;background:#c1c1c1"></div>
  <svg width="15" height="15" viewBox="0 0 15 15" style="position:absolute;left:1884px;top:0"><path d="M6 3.5 L10 7.5 L6 11.5 Z" fill="#505050"/></svg>
</div>
<div id="corner"></div>
</body></html>
